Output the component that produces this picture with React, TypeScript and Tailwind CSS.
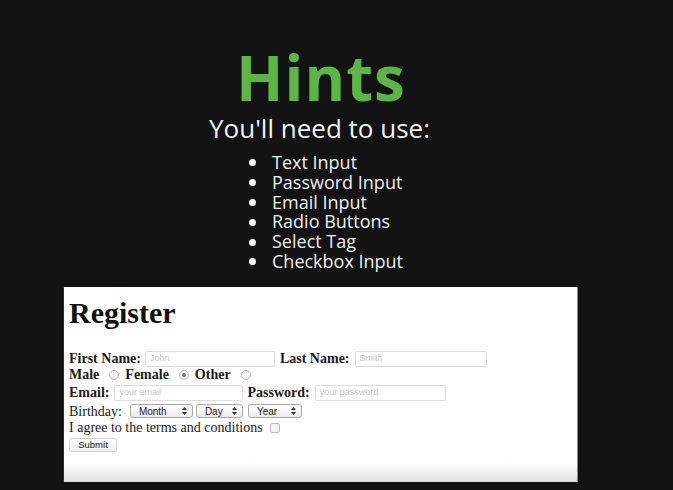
import React from "react";

const hints = ["Text Input", "Password Input", "Email Input", "Radio Buttons", "Select Tag", "Checkbox Input"];

const serif = { fontFamily: '"Liberation Serif", "Times New Roman", serif' };

function Field({ w, ph, ml }: { w: string; ph: string; ml: string }) {
  return (
    <div
      className={`${w} ${ml} h-[16px] rounded-[2px] border border-[#dcdcdc] bg-white pl-[4px] flex items-center text-[9px] font-normal text-[#c4c4c4] font-['Liberation_Sans',sans-serif]`}
    >
      {ph}
    </div>
  );
}

function Radio({ on }: { on?: boolean }) {
  return (
    <span className="ml-[10px] mr-[6px] w-[10px] h-[10px] rounded-full border border-[#bdbdbd] bg-[#f2f2f2] flex items-center justify-center">
      {on && <span className="w-[4px] h-[4px] rounded-full bg-[#777]" />}
    </span>
  );
}

function Picker({ label, w, ml }: { label: string; w: string; ml: string }) {
  return (
    <div
      className={`${w} ${ml} h-[14px] rounded-[3px] border border-[#a9a9a9] bg-[linear-gradient(#fff,#ececec)] flex items-center justify-between pl-[8px] pr-[5px] text-[10px] text-[#222] font-['Liberation_Sans',sans-serif]`}
    >
      <span>{label}</span>
      <svg width="5" height="8" viewBox="0 0 5 8">
        <path d="M2.5 0 L5 3 L0 3 Z M2.5 8 L5 5 L0 5 Z" fill="#333" />
      </svg>
    </div>
  );
}

export default function App() {
  return (
    <div className="w-[673px] h-[490px] bg-[#131313] overflow-hidden flex flex-col font-['Open_Sans',sans-serif]">
      <div className="w-[642px] flex flex-col items-center pt-[46px]">
        <h1 className="text-[62px] leading-[62px] font-bold tracking-[1px] text-[#5cb545]">Hints</h1>
        <p className="text-[26px] leading-[28px] text-[#f2f2f2] mt-[6px] ml-[-3px]">You'll need to use:</p>
      </div>
      <ul className="ml-[249px] mt-[11px] text-[18px] leading-[19.8px] text-[#f0f0f0]">
        {hints.map((h) => (
          <li key={h} className="flex items-center">
            <span className="w-[7px] h-[7px] rounded-full bg-white mr-[16px]" />
            {h}
          </li>
        ))}
      </ul>

      <div
        className="ml-[63px] mt-[15px] w-[515px] h-[195px] bg-[linear-gradient(to_bottom,#ffffff_90%,#e2e2e2)] border-l border-r border-l-[#2a2a2a] border-r-[#8a8a8a] pl-[5px] pt-[11px] text-[14px] text-[#1a1a1a]"
        style={serif}
      >
        <h2 className="text-[30px] leading-[30px] font-bold text-[#111]">Register</h2>

        <div className="mt-[23px] h-[16px] flex items-center font-bold">
          <span>First Name:</span>
          <Field w="w-[130px]" ml="ml-[4px]" ph="John" />
          <span className="ml-[5px]">Last Name:</span>
          <Field w="w-[132px]" ml="ml-[5px]" ph="Smith" />
        </div>

        <div className="h-[16px] flex items-center font-bold">
          <span>Male</span>
          <Radio />
          <span>Female</span>
          <Radio on />
          <span>Other</span>
          <Radio />
        </div>

        <div className="mt-[1px] h-[18px] flex items-center font-bold">
          <span>Email:</span>
          <Field w="w-[129px]" ml="ml-[5px]" ph="your email" />
          <span className="ml-[4px]">Password:</span>
          <Field w="w-[131px]" ml="ml-[5px]" ph="your password" />
        </div>

        <div className="mt-[1px] h-[17px] flex items-center">
          <span>Birthday:</span>
          <Picker label="Month" w="w-[63px]" ml="ml-[8px]" />
          <Picker label="Day" w="w-[47px]" ml="ml-[3px]" />
          <Picker label="Year" w="w-[54px]" ml="ml-[5px]" />
        </div>

        <div className="h-[16px] flex items-center">
          <span>I agree to the terms and conditions</span>
          <span className="ml-[7px] w-[10px] h-[10px] rounded-[2px] border border-[#bdbdbd] bg-[#f2f2f2]" />
        </div>

        <div className="mt-[2px] w-[48px] h-[14px] rounded-[3px] border border-[#cfcfcf] bg-[linear-gradient(#fff,#efefef)] flex items-center justify-center text-[9.5px] text-[#222] font-['Liberation_Sans',sans-serif]">
          Submit
        </div>
      </div>
    </div>
  );
}
